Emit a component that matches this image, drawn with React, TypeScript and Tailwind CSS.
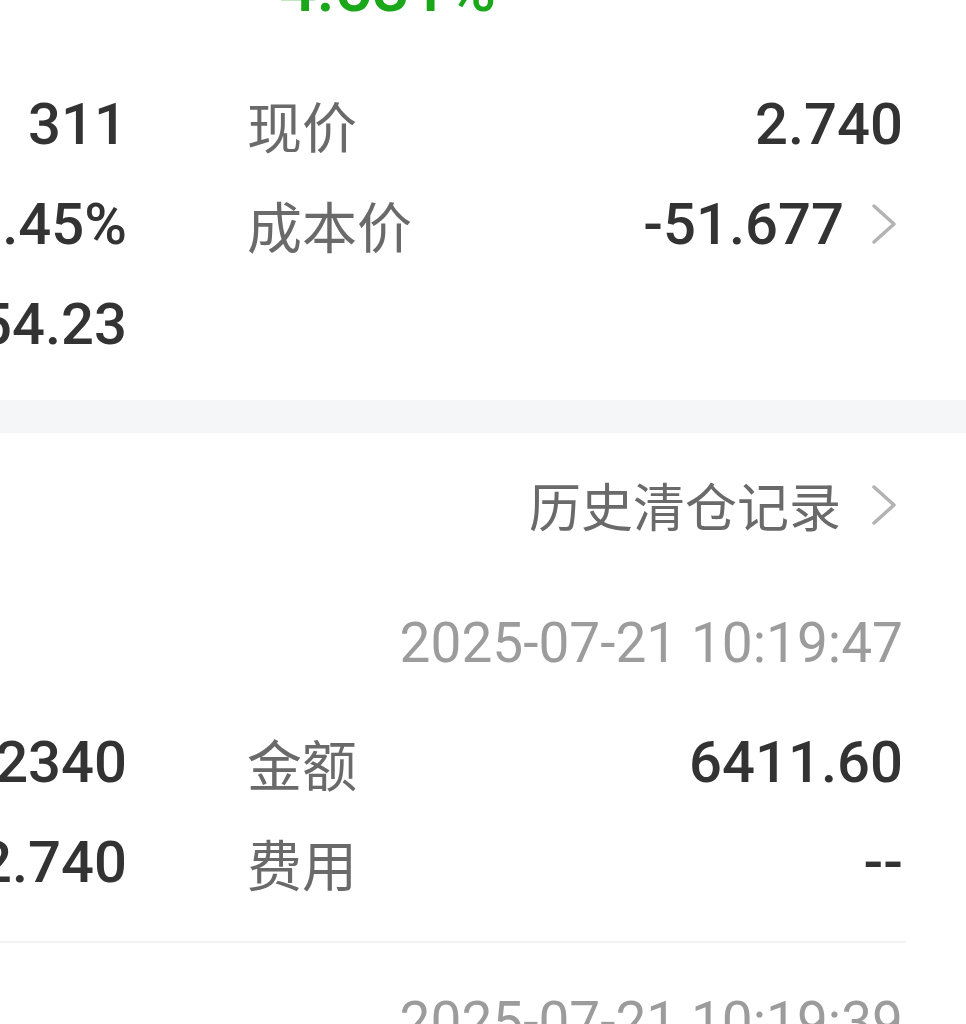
import React from "react";

const NUM = "font-['Roboto','Liberation_Sans',Arial,sans-serif]";
const CJK = "font-['Noto_Sans_CJK_SC','Noto_Sans',sans-serif]";

function Chevron() {
  return (
    <svg width="32" height="44" viewBox="0 0 32 44" className="shrink-0">
      <path d="M3 4 L23 22 L3 40" fill="none" stroke="#b3b3b3" strokeWidth="3.5" strokeLinecap="round" strokeLinejoin="round" />
    </svg>
  );
}

function Row({ left, label, value, chevron }: { left: string; label?: string; value?: string; chevron?: boolean }) {
  return (
    <div className="flex h-[100px] items-center pr-[63px]">
      <div className="flex w-[127px] shrink-0 justify-end">
        <span className={`${NUM} whitespace-nowrap text-[58px] font-medium leading-none text-[#333333]`}>{left}</span>
      </div>
      {label && (
        <span className={`${CJK} ml-[120px] whitespace-nowrap text-[55px] leading-none text-[#6a6a6a]`}>{label}</span>
      )}
      <div className="flex flex-1 items-center justify-end">
        {value && (
          <span className={`${NUM} whitespace-nowrap text-[58px] font-medium leading-none text-[#333333]`}>{value}</span>
        )}
        {chevron && (
          <div className="ml-[27px] flex items-center">
            <Chevron />
          </div>
        )}
      </div>
    </div>
  );
}

function Trade({ time, qty, price, amount, fee }: { time: string; qty: string; price: string; amount: string; fee: string }) {
  return (
    <div className="flex flex-col pt-[49px]">
      <div className="flex h-[60px] items-center justify-end pr-[63px]">
        <span className={`${NUM} whitespace-nowrap text-[55px] leading-none text-[#9c9c9c]`}>{time}</span>
      </div>
      <div className="mt-[39px]">
        <Row left={qty} label="金额" value={amount} />
        <Row left={price} label="费用" value={fee} />
      </div>
      <div className="mt-[29px] mr-[60px] h-[2px] bg-[#f3f3f3]" />
    </div>
  );
}

export default function App() {
  return (
    <div className="min-h-screen w-full overflow-hidden bg-white">
      <div className="flex h-[74px] flex-col">
        <div className={`${NUM} -mt-[44px] pl-[279px] text-[66px] font-medium leading-none text-[#1aa81a]`}>4.531%</div>
      </div>
      <Row left="311" label="现价" value="2.740" />
      <Row left="1.45%" label="成本价" value="-51.677" chevron />
      <Row left="-1654.23" />
      <div className="h-[26px]" />
      <div className="h-[33px] bg-[#f5f6f8]" />
      <div className="flex h-[131px] items-center justify-end pt-[13px] pr-[63px]">
        <span className={`${CJK} whitespace-nowrap text-[52px] leading-none text-[#6a6a6a]`}>历史清仓记录</span>
        <div className="ml-[30px] flex items-center">
          <Chevron />
        </div>
      </div>
      <Trade time="2025-07-21 10:19:47" qty="2340" price="2.740" amount="6411.60" fee="--" />
      <Trade time="2025-07-21 10:19:39" qty="2340" price="2.740" amount="6411.60" fee="--" />
    </div>
  );
}
